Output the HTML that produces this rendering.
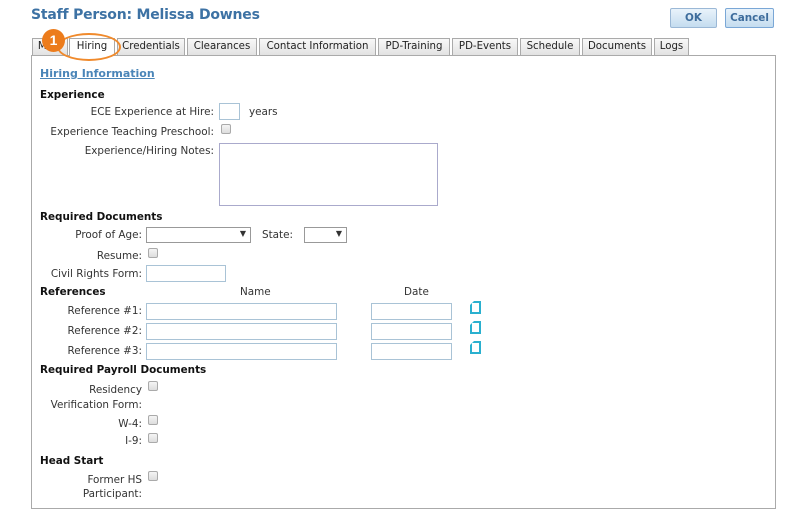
<!DOCTYPE html><html><head><style>
body{margin:0;width:800px;height:523px;background:#fff;font-family:"DejaVu Sans","Liberation Sans",sans-serif;font-size:10.4px;color:#333;position:relative;overflow:hidden}
.a{position:absolute;white-space:nowrap}
.r{text-align:right;width:200px}
.b{font-weight:bold;color:#111}
.in{position:absolute;border:1px solid #a9c3d6;background:#fff;box-sizing:border-box}
.cb{position:absolute;width:10px;height:10px;border:1px solid #aaa;border-radius:2px;background:linear-gradient(#f4f4f4,#ddd);box-sizing:border-box}
.tab{position:absolute;top:38px;height:17px;border:1px solid #aaa;border-bottom:none;background:linear-gradient(#f8f8f8,#e2e2e2);box-sizing:border-box;text-align:center;line-height:16px;color:#222;font-size:10.2px}
.doc{position:absolute;width:11px;height:13px;border:2px solid #2ab0cf;box-sizing:border-box;clip-path:polygon(4px 0,100% 0,100% 100%,0 100%,0 4px)}
.btn{position:absolute;top:8px;height:20px;border:1px solid #9bb8d6;border-radius:2px;background:linear-gradient(#e9f3fb,#c4dcef);font-weight:bold;color:#3d6c9c;text-align:center;line-height:18px;box-sizing:border-box}
</style></head><body>
<div class="a" style="left:31px;top:7px;font-size:14px;font-weight:bold;color:#3d72a4;letter-spacing:-0.2px">Staff Person: Melissa Downes</div>
<div class="btn" style="left:670px;width:47px">OK</div>
<div class="btn" style="left:725px;width:49px;border-color:#7aa7d6">Cancel</div>
<div style="position:absolute;left:31px;top:55px;width:745px;height:454px;border:1px solid #aaa;box-sizing:border-box"></div>
<div class="tab" style="left:32px;width:36px">Main</div>
<div class="tab" style="left:69px;width:46px;height:18px;background:#fff">Hiring</div>
<div class="tab" style="left:117px;width:68px">Credentials</div>
<div class="tab" style="left:187px;width:70px">Clearances</div>
<div class="tab" style="left:259px;width:117px">Contact Information</div>
<div class="tab" style="left:378px;width:72px">PD-Training</div>
<div class="tab" style="left:452px;width:66px">PD-Events</div>
<div class="tab" style="left:520px;width:60px">Schedule</div>
<div class="tab" style="left:582px;width:70px">Documents</div>
<div class="tab" style="left:654px;width:35px">Logs</div>
<div style="position:absolute;left:57px;top:33px;width:64px;height:28px;border:2px solid #f08a2c;border-radius:50%;box-sizing:border-box"></div>
<div style="position:absolute;left:42px;top:29px;width:23px;height:23px;border-radius:50%;background:#ec7c1c;color:#fff;font-weight:bold;font-size:14px;text-align:center;line-height:23px;font-family:'Liberation Sans',sans-serif">1</div>
<div class="a" style="left:40px;top:67px;font-size:11px;font-weight:bold;color:#4a85b8;text-decoration:underline">Hiring Information</div>
<div class="a b" style="left:40px;top:89px">Experience</div>
<div class="a r" style="left:14px;top:106px">ECE Experience at Hire:</div>
<div class="in" style="left:219px;top:103px;width:21px;height:17px"></div>
<div class="a" style="left:249px;top:106px">years</div>
<div class="a r" style="left:14px;top:126px">Experience Teaching Preschool:</div>
<div class="cb" style="left:221px;top:124px"></div>
<div class="a r" style="left:14px;top:145px">Experience/Hiring Notes:</div>
<div class="in" style="left:219px;top:143px;width:219px;height:63px;border-color:#aac"></div>
<div class="a b" style="left:40px;top:211px">Required Documents</div>
<div class="a r" style="left:-58px;top:229px">Proof of Age:</div>
<div class="in" style="left:146px;top:227px;width:105px;height:16px;border-color:#999"><span style="position:absolute;right:4px;top:1px;font-size:8px">▼</span></div>
<div class="a" style="left:262px;top:229px">State:</div>
<div class="in" style="left:304px;top:227px;width:43px;height:16px;border-color:#999"><span style="position:absolute;right:4px;top:1px;font-size:8px">▼</span></div>
<div class="a r" style="left:-58px;top:250px">Resume:</div>
<div class="cb" style="left:148px;top:248px"></div>
<div class="a r" style="left:-58px;top:268px">Civil Rights Form:</div>
<div class="in" style="left:146px;top:265px;width:80px;height:17px"></div>
<div class="a b" style="left:40px;top:286px">References</div>
<div class="a" style="left:240px;top:286px">Name</div>
<div class="a" style="left:404px;top:286px">Date</div>
<div class="a r" style="left:-58px;top:305px">Reference #1:</div>
<div class="a r" style="left:-58px;top:325px">Reference #2:</div>
<div class="a r" style="left:-58px;top:345px">Reference #3:</div>
<div class="in" style="left:146px;top:303px;width:191px;height:17px"></div>
<div class="in" style="left:146px;top:323px;width:191px;height:17px"></div>
<div class="in" style="left:146px;top:343px;width:191px;height:17px"></div>
<div class="in" style="left:371px;top:303px;width:81px;height:17px"></div>
<div class="in" style="left:371px;top:323px;width:81px;height:17px"></div>
<div class="in" style="left:371px;top:343px;width:81px;height:17px"></div>
<div class="doc" style="left:470px;top:301px"></div>
<div class="doc" style="left:470px;top:321px"></div>
<div class="doc" style="left:470px;top:341px"></div>
<div class="a b" style="left:40px;top:364px">Required Payroll Documents</div>
<div class="a r" style="left:-58px;top:384px">Residency</div>
<div class="a r" style="left:-58px;top:399px">Verification Form:</div>
<div class="cb" style="left:148px;top:381px"></div>
<div class="a r" style="left:-58px;top:418px">W-4:</div>
<div class="cb" style="left:148px;top:415px"></div>
<div class="a r" style="left:-58px;top:435px">I-9:</div>
<div class="cb" style="left:148px;top:433px"></div>
<div class="a b" style="left:40px;top:455px">Head Start</div>
<div class="a r" style="left:-58px;top:474px">Former HS</div>
<div class="a r" style="left:-58px;top:488px">Participant:</div>
<div class="cb" style="left:148px;top:471px"></div>
</body></html>
